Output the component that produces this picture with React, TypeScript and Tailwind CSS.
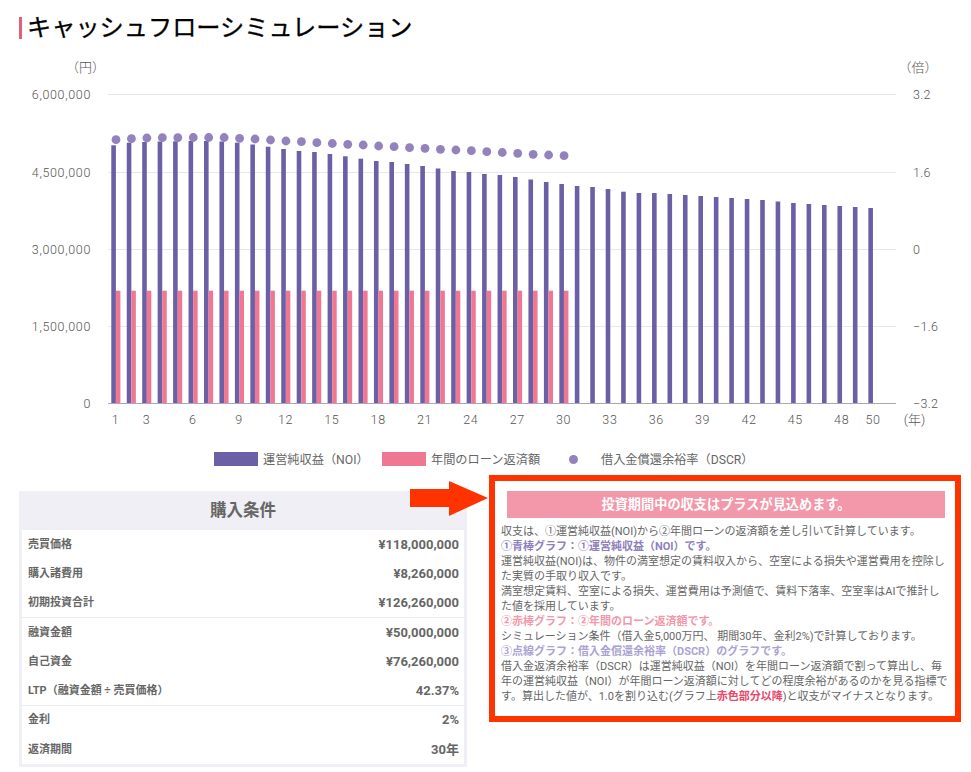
const noi = [145.3,142.7,142,141.5,141.3,141,141,141.5,142.7,144.5,146.7,149,151,152,154,156.3,158.7,161,162,164,166,168.5,171,172,174,175,177,179.5,182,184,186,187,189,191.7,193,193,194,195,196,197,198,199,200,201.5,203,204,205,206,207,208];
const dscr = [139.7,138.7,138,137.7,137.7,137.5,137.5,137.5,138.3,139,140,141,141.7,142.7,143.5,144.3,145,146,146.7,147.7,148.3,149.3,150,150.7,151.7,152.5,153.3,154.3,155,155.7];
const grid = [94, 172, 249, 326];
const left = [["6,000,000", 94], ["4,500,000", 172], ["3,000,000", 249], ["1,500,000", 326], ["0", 403]] as const;
const right = [["3.2", 94], ["1.6", 172], ["0", 249], ["−1.6", 326], ["−3.2", 403]] as const;
const xTicks = [1, 3, 6, 9, 12, 15, 18, 21, 24, 27, 30, 33, 36, 39, 42, 45, 48];

const rows = [
  { label: "売買価格", value: "¥118,000,000" },
  { label: "購入諸費用", value: "¥8,260,000" },
  { label: "初期投資合計", value: "¥126,260,000", line: true },
  { label: "融資金額", value: "¥50,000,000" },
  { label: "自己資金", value: "¥76,260,000" },
  { label: "LTP（融資金額 ÷ 売買価格）", value: "42.37%", line: true },
  { label: "金利", value: "2%" },
  { label: "返済期間", value: "30年" },
];

const font = "[font-family:Roboto,'Noto_Sans_CJK_JP',sans-serif]";

function Chart() {
  const labelFont = "Roboto, 'Noto Sans CJK JP', sans-serif";
  return (
    <svg width={971} height={390} viewBox="0 50 971 390" className="block" fontFamily={labelFont} fontSize={12.5} fontWeight={300} fill="#555555">
      {grid.map((y) => (
        <line key={y} x1={108} x2={896} y1={y + 0.5} y2={y + 0.5} stroke="#e8e6ef" />
      ))}
      {noi.map((top, i) => {
        const x = 111.3 + i * 15.45;
        return <rect key={i} x={x} y={top} width={4.6} height={403 - top} fill="#6b5fa6" />;
      })}
      {dscr.map((_, i) => {
        const x = 115.9 + i * 15.45;
        return <rect key={i} x={x} y={290.7} width={4.5} height={112.3} fill="#ef7791" />;
      })}
      <line x1={108} x2={896} y1={403.5} y2={403.5} stroke="#a9a6b8" />
      {dscr.map((y, i) => (
        <circle key={i} cx={116 + i * 15.45} cy={y} r={4.4} fill="#9382bb" />
      ))}
      <text x={85.5} y={72} textAnchor="middle" fontSize={13}>（円）</text>
      <text x={918} y={72} textAnchor="middle" fontSize={13}>（倍）</text>
      {left.map(([t, y]) => (
        <text key={t} x={91} y={y + 4.5} textAnchor="end" letterSpacing={0.65}>{t}</text>
      ))}
      {right.map(([t, y]) => (
        <text key={t} x={913} y={y + 4.5} letterSpacing={0.3}>{t}</text>
      ))}
      {xTicks.map((n) => (
        <text key={n} x={115.5 + (n - 1) * 15.45} y={424} textAnchor="middle" letterSpacing={0.6}>{n}</text>
      ))}
      <text x={873} y={424} textAnchor="middle" letterSpacing={0.6}>50</text>
      <text x={914.5} y={424} textAnchor="middle" fontSize={13}>(年)</text>
    </svg>
  );
}

function Legend() {
  return (
    <div className="flex items-center h-[14px] mt-[12px] pl-[214px] text-[12.2px] text-[#666666]">
      <span className="w-[44px] h-[14px] bg-[#6b5fa6]" />
      <span className="ml-[5px] w-[119px] pt-[3px]">運営純収益（NOI）</span>
      <span className="w-[44px] h-[14px] bg-[#ef7791]" />
      <span className="ml-[5px] w-[138px] pt-[3px]">年間のローン返済額</span>
      <span className="w-[9px] h-[9px] rounded-full bg-[#9382bb] mr-[23px]" />
      <span className="pt-[3px]">借入金償還余裕率（DSCR）</span>
    </div>
  );
}

function Conditions() {
  return (
    <div className="w-[448px] mt-[16px] bg-[#f0eff5] px-[3px] pb-[3px]">
      <div className="h-[39px] pt-[1px] flex items-center justify-center text-[16.5px] font-bold text-[#666666]">購入条件</div>
      <div className="bg-white">
        {rows.map((r) => (
          <div key={r.label} className={`h-[29.25px] flex items-center justify-between pl-[6px] pr-[5px] text-[#666666] ${r.line ? "border-b border-[#ebebf0]" : ""}`}>
            <span className="text-[11px] font-bold pt-[1px]">{r.label}</span>
            <span className="text-[13px] font-bold">{r.value}</span>
          </div>
        ))}
      </div>
    </div>
  );
}

function Note() {
  return (
    <div className="w-[472px] h-[247px] ml-[22px] border-[6px] border-[#ff3300] px-[6px] pt-[10px] text-[11px] leading-[15px] text-[#666666]">
      <div className="ml-[6px] w-[438px] h-[27px] flex items-center justify-center bg-[#f398aa] text-white text-[13.2px] font-bold mb-[6px]">
        投資期間中の収支はプラスが見込めます。
      </div>
      <p>収支は、①運営純収益(NOI)から②年間ローンの返済額を差し引いて計算しています。</p>
      <p className="font-bold text-[#8f80bb]">①青棒グラフ：①運営純収益（NOI）です。</p>
      <p>運営純収益(NOI)は、物件の満室想定の賃料収入から、空室による損失や運営費用を控除した実質の手取り収入です。</p>
      <p>満室想定賃料、空室による損失、運営費用は予測値で、賃料下落率、空室率はAIで推計した値を採用しています。</p>
      <p className="font-bold text-[#f398aa]">②赤棒グラフ：②年間のローン返済額です。</p>
      <p>シミュレーション条件（借入金5,000万円、 期間30年、金利2%)で計算しております。</p>
      <p className="font-bold text-[#aba3d3]">③点線グラフ：借入金償還余裕率（DSCR）のグラフです。</p>
      <p>借入金返済余裕率（DSCR）は運営純収益（NOI）を年間ローン返済額で割って算出し、毎年の運営純収益（NOI）が年間ローン返済額に対してどの程度余裕があるのかを見る指標です。算出した値が、1.0を割り込む(グラフ上<b className="text-[#e8486a]">赤色部分以降</b>)と収支がマイナスとなります。</p>
    </div>
  );
}

export default function App() {
  return (
    <div className={`relative w-[971px] h-[772px] overflow-hidden bg-white ${font}`}>
      <h1 className="ml-[19px] mt-[17px] h-[22px] border-l-[3px] border-[#e0607a] pl-[5px] flex items-center text-[24.2px] font-normal text-black [-webkit-text-stroke:0.3px_#000] mb-[11px]">
        キャッシュフローシミュレーション
      </h1>
      <Chart />
      <Legend />
      <div className="flex items-start ml-[19px] mt-[9px]">
        <Conditions />
        <Note />
      </div>
      <svg className="absolute left-[410px] top-[481px]" width={78} height={36} viewBox="0 0 78 36">
        <path d="M0 8H39V0L78 17L39 35V26H0Z" fill="#ff3300" />
      </svg>
    </div>
  );
}
